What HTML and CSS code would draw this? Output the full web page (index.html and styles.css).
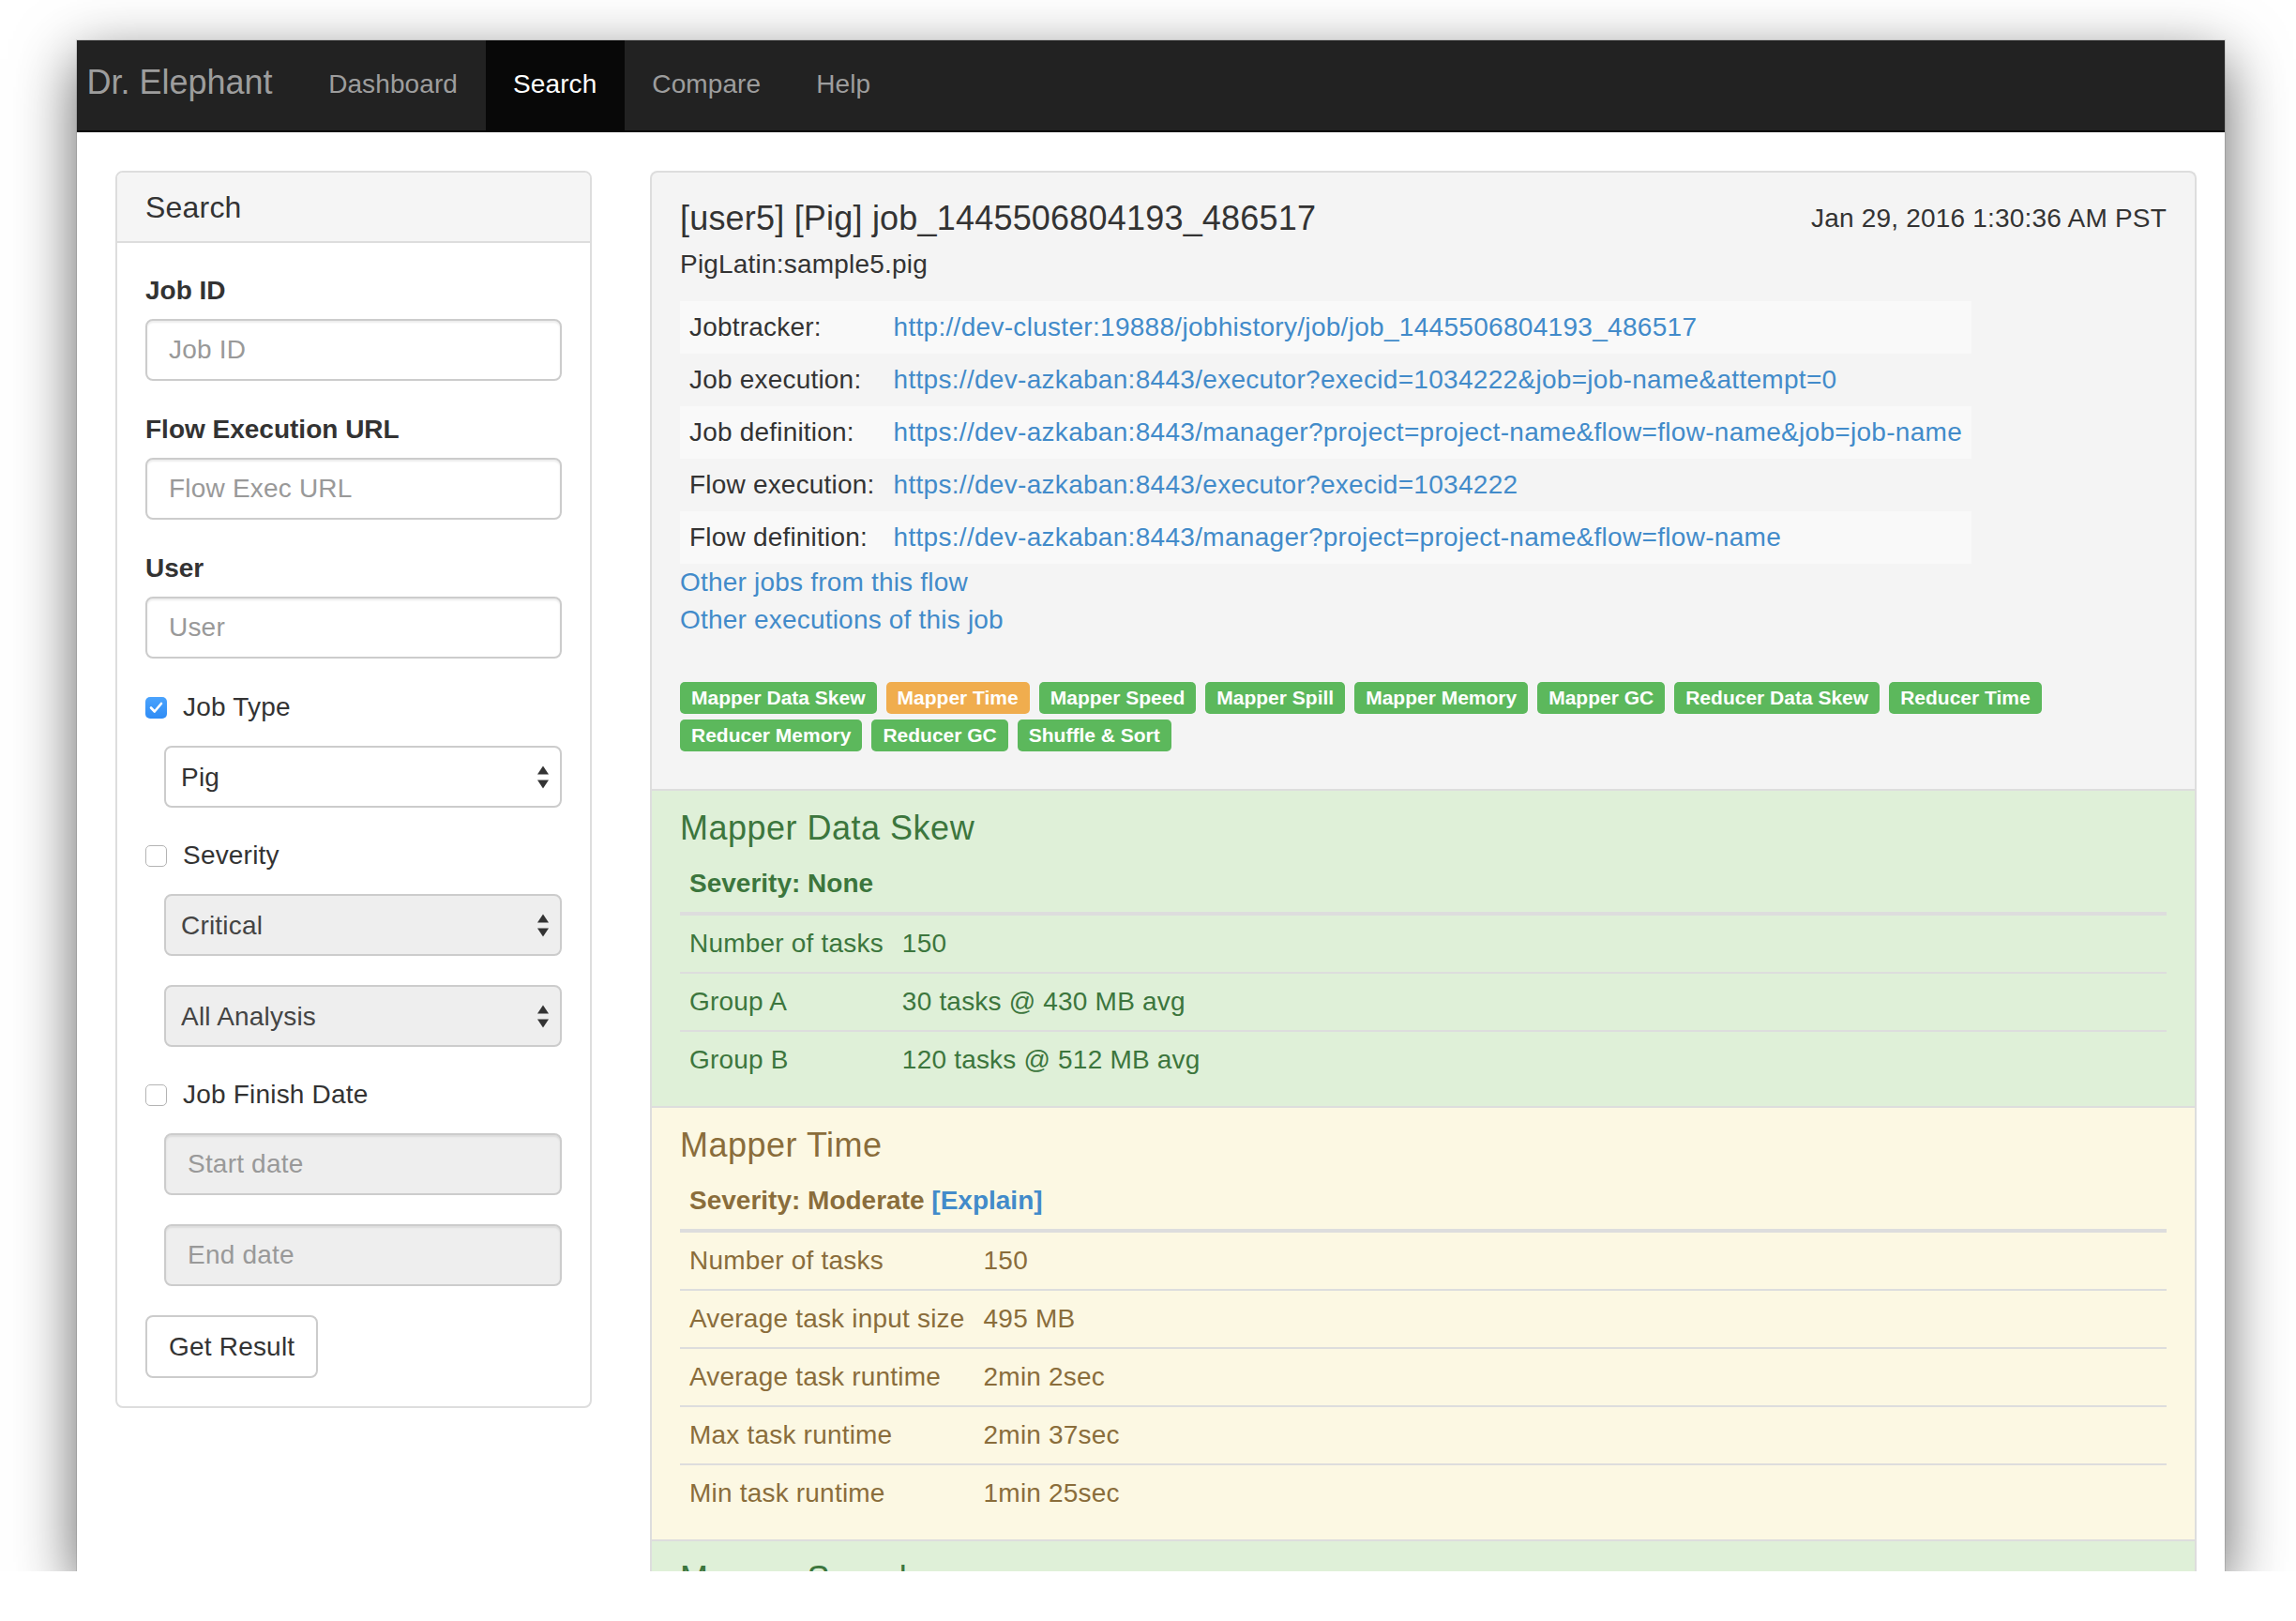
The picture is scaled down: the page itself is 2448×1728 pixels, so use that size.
FILE: index.html
```html
<!DOCTYPE html>
<html lang="en">
<head>
<meta charset="utf-8">
<title>Dr. Elephant - Search</title>
<link rel="stylesheet" href="styles.css">
</head>
<body>
<div class="window">
  <nav class="navbar">
    <span class="brand">Dr. Elephant</span>
    <ul class="nav">
      <li><a href="#">Dashboard</a></li>
      <li class="active"><a href="#">Search</a></li>
      <li><a href="#">Compare</a></li>
      <li><a href="#">Help</a></li>
    </ul>
  </nav>

  <div class="content">
    <aside class="search-panel">
      <div class="panel-heading">Search</div>
      <div class="panel-body">
        <div class="form-group">
          <label class="field-label">Job ID</label>
          <input class="form-control" type="text" placeholder="Job ID">
        </div>
        <div class="form-group">
          <label class="field-label">Flow Execution URL</label>
          <input class="form-control" type="text" placeholder="Flow Exec URL">
        </div>
        <div class="form-group">
          <label class="field-label">User</label>
          <input class="form-control" type="text" placeholder="User">
        </div>

        <div class="check-row">
          <span class="cb checked"><svg width="23" height="23" viewBox="0 0 23 23"><path d="M6 11.5 L9.8 15.5 L17 7" fill="none" stroke="#fff" stroke-width="2.6" stroke-linecap="round" stroke-linejoin="round"/></svg></span>
          <span>Job Type</span>
        </div>
        <div class="select-wrap">
          <select class="select"><option>Pig</option></select>
          <svg class="arrows" width="12" height="25" viewBox="0 0 12 25"><polygon points="0,9.5 6,0.5 12,9.5" fill="#333"/><polygon points="0,15.5 6,24.5 12,15.5" fill="#333"/></svg>
        </div>

        <div class="check-row">
          <span class="cb"></span>
          <span>Severity</span>
        </div>
        <div class="select-wrap">
          <select class="select off"><option>Critical</option></select>
          <svg class="arrows" width="12" height="25" viewBox="0 0 12 25"><polygon points="0,9.5 6,0.5 12,9.5" fill="#333"/><polygon points="0,15.5 6,24.5 12,15.5" fill="#333"/></svg>
        </div>
        <div class="select-wrap">
          <select class="select off"><option>All Analysis</option></select>
          <svg class="arrows" width="12" height="25" viewBox="0 0 12 25"><polygon points="0,9.5 6,0.5 12,9.5" fill="#333"/><polygon points="0,15.5 6,24.5 12,15.5" fill="#333"/></svg>
        </div>

        <div class="check-row">
          <span class="cb"></span>
          <span>Job Finish Date</span>
        </div>
        <div class="indent">
          <input class="form-control off" type="text" placeholder="Start date">
        </div>
        <div class="indent">
          <input class="form-control off" type="text" placeholder="End date">
        </div>

        <button class="btn" type="button">Get Result</button>
      </div>
    </aside>

    <main class="job-panel">
      <div class="job-header">
        <div class="title-row">
          <h4 class="job-title">[user5] [Pig] job_1445506804193_486517</h4>
          <span class="date">Jan 29, 2016 1:30:36 AM PST</span>
        </div>
        <div class="jobname">PigLatin:sample5.pig</div>

        <table class="links">
          <tr><td class="lbl">Jobtracker:</td><td><a href="#">http://dev-cluster:19888/jobhistory/job/job_1445506804193_486517</a></td></tr>
          <tr><td class="lbl">Job execution:</td><td><a href="#">https://dev-azkaban:8443/executor?execid=1034222&amp;job=job-name&amp;attempt=0</a></td></tr>
          <tr><td class="lbl">Job definition:</td><td><a href="#">https://dev-azkaban:8443/manager?project=project-name&amp;flow=flow-name&amp;job=job-name</a></td></tr>
          <tr><td class="lbl">Flow execution:</td><td><a href="#">https://dev-azkaban:8443/executor?execid=1034222</a></td></tr>
          <tr><td class="lbl">Flow definition:</td><td><a href="#">https://dev-azkaban:8443/manager?project=project-name&amp;flow=flow-name</a></td></tr>
        </table>
        <a class="block-link" href="#">Other jobs from this flow</a>
        <a class="block-link" href="#">Other executions of this job</a>

        <div class="badges">
          <span class="badge">Mapper Data Skew</span>
          <span class="badge warn">Mapper Time</span>
          <span class="badge">Mapper Speed</span>
          <span class="badge">Mapper Spill</span>
          <span class="badge">Mapper Memory</span>
          <span class="badge">Mapper GC</span>
          <span class="badge">Reducer Data Skew</span>
          <span class="badge">Reducer Time</span>
          <span class="badge">Reducer Memory</span>
          <span class="badge">Reducer GC</span>
          <span class="badge">Shuffle &amp; Sort</span>
        </div>
      </div>

      <section class="heur success">
        <h4>Mapper Data Skew</h4>
        <table class="metrics">
          <thead><tr><th colspan="2">Severity: None</th></tr></thead>
          <tbody>
            <tr><td>Number of tasks</td><td>150</td></tr>
            <tr><td>Group A</td><td>30 tasks @ 430 MB avg</td></tr>
            <tr><td>Group B</td><td>120 tasks @ 512 MB avg</td></tr>
          </tbody>
        </table>
      </section>

      <section class="heur warning">
        <h4>Mapper Time</h4>
        <table class="metrics">
          <thead><tr><th colspan="2">Severity: Moderate <a href="#">[Explain]</a></th></tr></thead>
          <tbody>
            <tr><td>Number of tasks</td><td>150</td></tr>
            <tr><td>Average task input size</td><td>495 MB</td></tr>
            <tr><td>Average task runtime</td><td>2min 2sec</td></tr>
            <tr><td>Max task runtime</td><td>2min 37sec</td></tr>
            <tr><td>Min task runtime</td><td>1min 25sec</td></tr>
          </tbody>
        </table>
      </section>

      <section class="heur success">
        <h4>Mapper Speed</h4>
        <table class="metrics">
          <thead><tr><th colspan="2">Severity: None</th></tr></thead>
          <tbody>
            <tr><td>Number of tasks</td><td>150</td></tr>
          </tbody>
        </table>
      </section>
    </main>
  </div>
</div>
</body>
</html>
```

FILE: styles.css
```css
* {
  box-sizing: border-box;
}

html, body {
  margin: 0;
  background: #fff;
}

body {
  padding: 43px 0 0 82px;
  font-family: "Liberation Sans", Arial, sans-serif;
  font-size: 28px;
  line-height: 40px;
  letter-spacing: 0.2px;
  color: #333;
}

a {
  color: #428bca;
  text-decoration: none;
}

.window {
  width: 2290px;
  height: 1632px;
  overflow: hidden;
  background: #fff;
  box-shadow: 0 20px 60px rgba(0, 0, 0, 0.62), 0 0 0 1px rgba(0, 0, 0, 0.1);
}

/* navbar */
.navbar {
  display: flex;
  height: 98px;
  background: #222;
  border-bottom: 2px solid #080808;
}

.brand {
  padding: 0 30px 0 10.5px;
  font-size: 36px;
  line-height: 90px;
  letter-spacing: 0;
  color: #9d9d9d;
}

.nav {
  display: flex;
  list-style: none;
  margin: 0;
  padding: 0;
}

.nav a {
  display: block;
  height: 96px;
  line-height: 94px;
  padding: 0 29.5px;
  letter-spacing: 0.1px;
  color: #9d9d9d;
}

.nav .active a {
  background: #080808;
  color: #fff;
}

/* layout */
.content {
  display: flex;
  align-items: flex-start;
  gap: 62px;
  padding: 41px 30px 0 41px;
}

/* search panel */
.search-panel {
  width: 508px;
  flex: none;
  border: 2px solid #ddd;
  border-radius: 8px;
  background: #fff;
}

.panel-heading {
  background: #f5f5f5;
  border-bottom: 2px solid #ddd;
  border-radius: 6px 6px 0 0;
  padding: 20px 30px 18px;
  font-size: 32px;
  line-height: 35px;
}

.panel-body {
  padding: 31px 30px 30px;
}

.form-group {
  margin-bottom: 32px;
}

.field-label {
  display: block;
  font-weight: bold;
  letter-spacing: 0;
  margin-bottom: 10px;
}

.form-control {
  display: block;
  width: 100%;
  height: 66px;
  margin: 0;
  padding: 0 23px;
  border: 2px solid #ccc;
  border-radius: 8px;
  background: #fff;
  box-shadow: inset 0 2px 2px rgba(0, 0, 0, 0.075);
  font-family: inherit;
  font-size: 28px;
  letter-spacing: 0.2px;
  color: #555;
  outline: none;
}

.form-control::placeholder {
  color: #999;
  opacity: 1;
}

.form-control.off {
  background: #eee;
}

.indent {
  margin-left: 20px;
  margin-bottom: 31px;
}

.check-row {
  display: flex;
  align-items: center;
  gap: 17px;
  height: 40px;
  margin-bottom: 21px;
}

.cb {
  display: block;
  width: 23px;
  height: 23px;
  border: 1.5px solid #b4b4b4;
  border-radius: 5px;
  background: #fff;
  flex: none;
}

.cb.checked {
  border: none;
  background: linear-gradient(#4aa3fd, #2f8cf5);
}

.cb svg {
  display: block;
}

.select-wrap {
  position: relative;
  margin-left: 20px;
  margin-bottom: 31px;
}

.select {
  display: block;
  width: 100%;
  height: 66px;
  margin: 0;
  padding: 0 16px;
  border: 2px solid #ccc;
  border-radius: 8px;
  background: #fff;
  font-family: inherit;
  font-size: 28px;
  letter-spacing: 0.2px;
  color: #333;
  -webkit-appearance: none;
  appearance: none;
  outline: none;
}

.select.off {
  background: #eee;
  color: #444;
}

.arrows {
  position: absolute;
  right: 14px;
  top: 21px;
}

.btn {
  display: block;
  height: 67px;
  padding: 0 23px;
  border: 2px solid #ccc;
  border-radius: 8px;
  background: #fff;
  font-family: inherit;
  font-size: 28px;
  letter-spacing: 0.2px;
  color: #333;
}

/* job panel */
.job-panel {
  flex: 1;
  min-width: 0;
  border: 2px solid #ddd;
  border-bottom: none;
  border-radius: 8px 8px 0 0;
  overflow: hidden;
  background: #f4f4f4;
}

.job-header {
  padding: 29px 30px 40px;
}

.title-row {
  display: flex;
  justify-content: space-between;
  align-items: flex-start;
}

.job-title,
.heur h4 {
  margin: 0;
  font-size: 36px;
  line-height: 40px;
  font-weight: normal;
}

.heur h4 {
  letter-spacing: 0.5px;
}

.jobname {
  margin-top: 9px;
}

.links {
  margin-top: 19px;
  border-collapse: collapse;
}

.links td {
  padding: 8px 10px;
  white-space: nowrap;
}

.links a {
  letter-spacing: 0.3px;
}

.links tr:nth-child(odd) td {
  background: #f9f9f9;
}

.block-link {
  display: block;
  width: max-content;
}

.badges {
  display: flex;
  flex-wrap: wrap;
  column-gap: 10px;
  row-gap: 6px;
  margin-top: 46px;
}

.badge {
  display: block;
  height: 34px;
  padding: 0 12px;
  border-radius: 5px;
  background: #5cb85c;
  color: #fff;
  font-size: 21px;
  font-weight: bold;
  line-height: 33px;
  letter-spacing: 0;
  white-space: nowrap;
}

.badge.warn {
  background: #f0ad4e;
}

/* heuristic sections */
.heur {
  border-top: 2px solid #ddd;
  padding: 20px 30px 19px;
}

.heur h4 {
  margin-bottom: 9px;
}

.success {
  background: #dff0d8;
  color: #3c763d;
}

.warning {
  background: #fcf8e3;
  color: #8a6d3b;
}

.metrics {
  width: 100%;
  border-collapse: collapse;
}

.metrics th {
  text-align: left;
  padding: 10px;
  font-weight: bold;
  letter-spacing: 0;
  border-bottom: 4px solid #ddd;
}

.metrics td {
  padding: 10px;
}

.metrics tbody tr + tr td {
  border-top: 2px solid #ddd;
}

.metrics td:first-child {
  width: 1%;
  white-space: nowrap;
}
```
